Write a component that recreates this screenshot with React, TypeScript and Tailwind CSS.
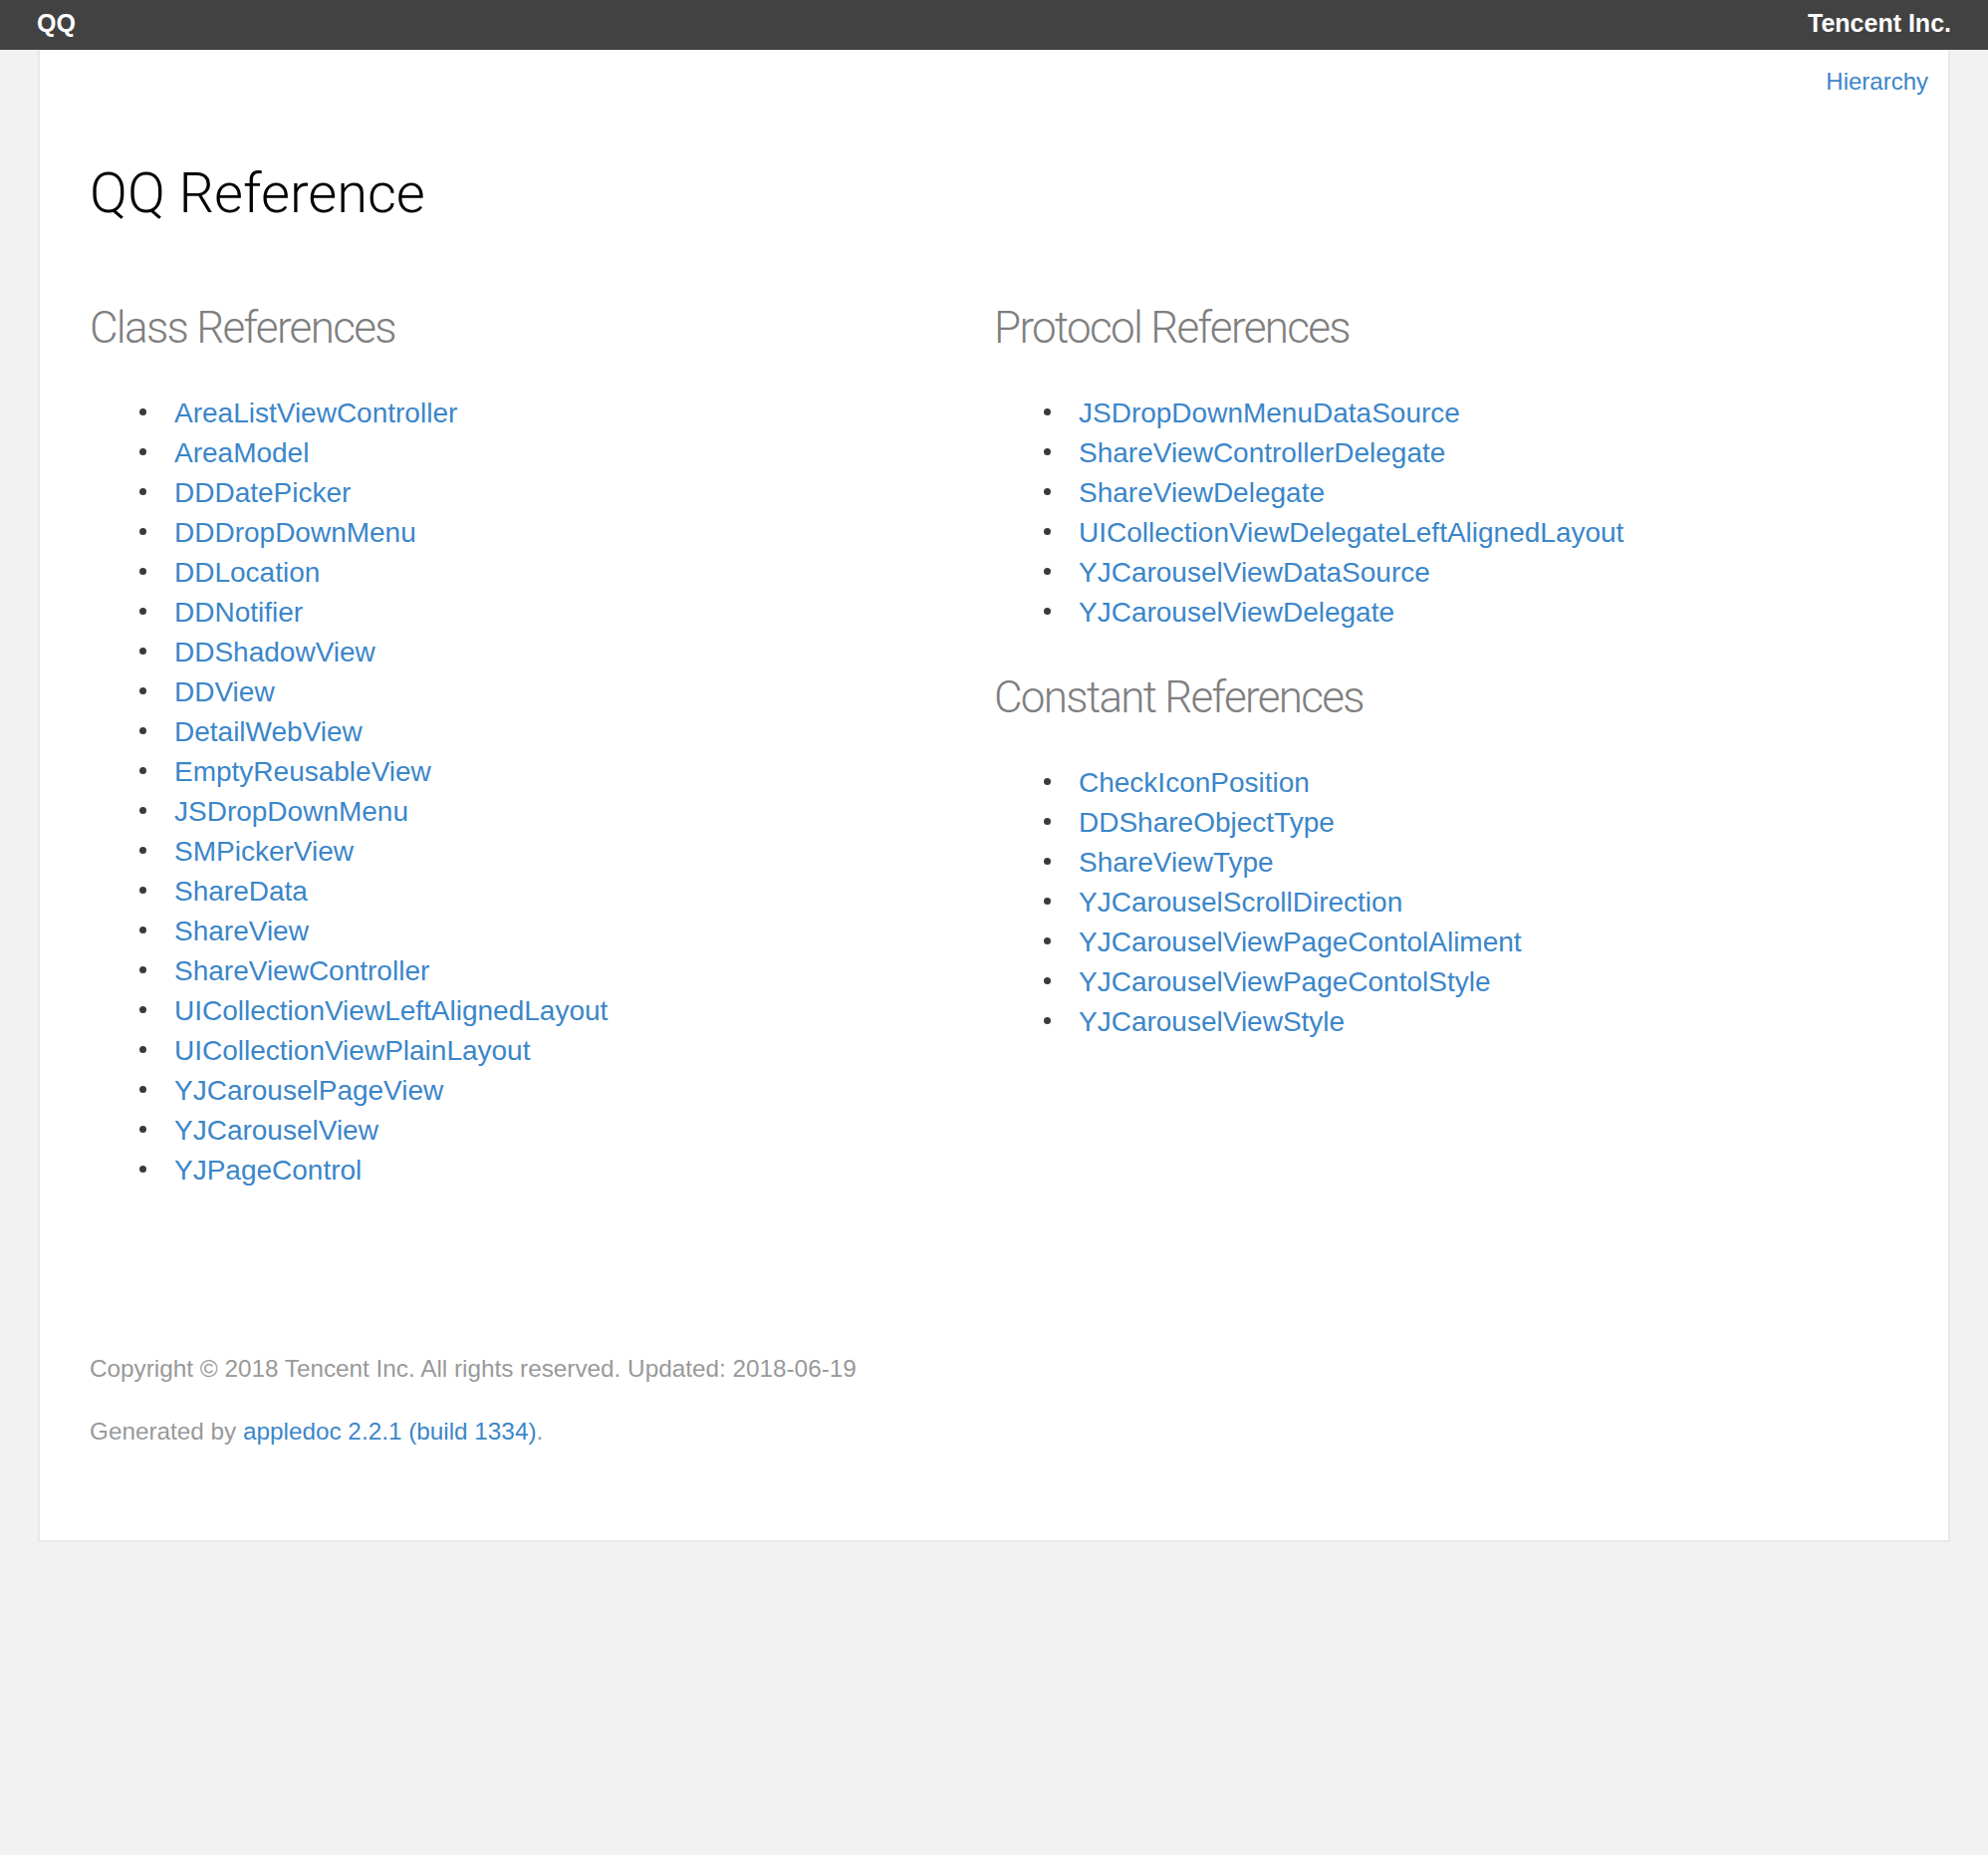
import React from "react";

const classes = [
  "AreaListViewController",
  "AreaModel",
  "DDDatePicker",
  "DDDropDownMenu",
  "DDLocation",
  "DDNotifier",
  "DDShadowView",
  "DDView",
  "DetailWebView",
  "EmptyReusableView",
  "JSDropDownMenu",
  "SMPickerView",
  "ShareData",
  "ShareView",
  "ShareViewController",
  "UICollectionViewLeftAlignedLayout",
  "UICollectionViewPlainLayout",
  "YJCarouselPageView",
  "YJCarouselView",
  "YJPageControl",
];

const protocols = [
  "JSDropDownMenuDataSource",
  "ShareViewControllerDelegate",
  "ShareViewDelegate",
  "UICollectionViewDelegateLeftAlignedLayout",
  "YJCarouselViewDataSource",
  "YJCarouselViewDelegate",
];

const constants = [
  "CheckIconPosition",
  "DDShareObjectType",
  "ShareViewType",
  "YJCarouselScrollDirection",
  "YJCarouselViewPageContolAliment",
  "YJCarouselViewPageContolStyle",
  "YJCarouselViewStyle",
];

function RefList({ items }: { items: string[] }) {
  return (
    <ul className="mt-[40px]">
      {items.map((name) => (
        <li key={name} className="flex items-center h-[40px] leading-[40px]">
          <span className="ml-[50px] mb-[3px] w-[7px] h-[7px] rounded-full bg-[#3a3a3a] shrink-0" />
          <a href="#" className="ml-[28px] text-[#3b86c9] text-[28px] whitespace-nowrap">
            {name}
          </a>
        </li>
      ))}
    </ul>
  );
}

function Heading({ children, className = "" }: { children: React.ReactNode; className?: string }) {
  return (
    <h2
      className={`text-[44px] leading-[52px] font-light tracking-[-1.7px] text-[#7f7f7f] ${className}`}
      style={{ fontFamily: "Roboto, 'Liberation Sans', sans-serif" }}
    >
      {children}
    </h2>
  );
}

export default function App() {
  return (
    <div
      className="min-h-screen bg-[#f2f2f2] pb-[314px]"
      style={{ fontFamily: "'Liberation Sans', Arial, sans-serif" }}
    >
      <header className="h-[50px] bg-[#424242] flex items-start justify-between px-[37px] text-white font-bold text-[25px] leading-[46px]">
        <span>QQ</span>
        <span>Tencent Inc.</span>
      </header>

      <div className="mx-[38px] bg-white border-2 border-t-0 border-[#e8e8e8] pb-[94px]">
        <div className="pt-[17px] pr-[20px] flex justify-end">
          <a href="#" className="text-[24px] leading-[30px] text-[#3b86c9]">
            Hierarchy
          </a>
        </div>

        <h1
          className="mt-[65px] pl-[50px] text-[56px] leading-[64px] font-light text-black"
          style={{ fontFamily: "Roboto, 'Liberation Sans', sans-serif" }}
        >
          QQ Reference
        </h1>

        <div className="mt-[77px] px-[50px] grid grid-cols-2">
          <div>
            <Heading>Class References</Heading>
            <RefList items={classes} />
          </div>
          <div>
            <Heading>Protocol References</Heading>
            <RefList items={protocols} />
            <Heading className="mt-[39px]">Constant References</Heading>
            <RefList items={constants} />
          </div>
        </div>

        <footer className="mt-[164px] px-[50px] text-[24.3px] leading-[30px] text-[#999999]">
          <p>Copyright © 2018 Tencent Inc. All rights reserved. Updated: 2018-06-19</p>
          <p className="mt-[33px]">
            Generated by{" "}
            <a href="#" className="text-[#3b86c9]">
              appledoc 2.2.1 (build 1334)
            </a>
            .
          </p>
        </footer>
      </div>
    </div>
  );
}
